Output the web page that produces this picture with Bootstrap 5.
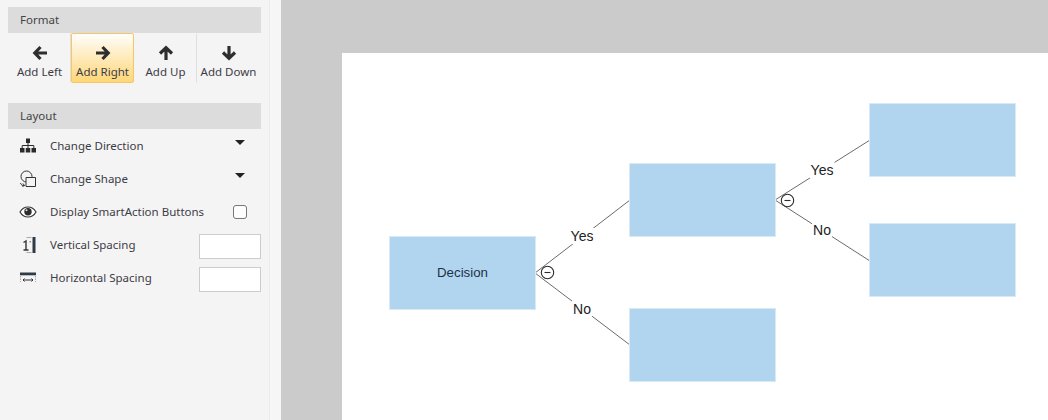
<!DOCTYPE html>
<html lang="en">
<head>
<meta charset="utf-8">
<title>Decision tree</title>
<link href="https://cdn.jsdelivr.net/npm/bootstrap@5.3.0/dist/css/bootstrap.min.css" rel="stylesheet">
<style>
html,body{height:420px;overflow:hidden;background:#cbcbcb}
.shell{width:1048px;height:420px}
.side{width:281px;flex:none;background:#f4f4f4;padding:7px 9px 0 8px;font-family:"Noto Sans","Open Sans",sans-serif;font-size:11.5px;color:#3c3c46;border-right:11px solid #f6f6f6;box-shadow:inset -1px 0 0 #ececec}
.sect{height:26px;background:#dcdcdc;padding-left:12px;line-height:26px;font-size:11.5px;color:#444}
.tools{height:50px;margin-bottom:20px}
.tool{width:63px;height:50px;flex:none;padding:0;border:1px solid transparent;border-radius:2px;color:#3c3c46;line-height:1.2;--bs-btn-font-size:11.5px}
.tool svg{display:block;margin:7px auto 4px;width:16px;height:16px}
.tool.on{border-color:#f7c766;background:linear-gradient(#fffefb,#fed677)}
.tool.sepr{border-right-color:#e0e0e0;border-radius:0}
.optrow{height:33px;padding-left:11px}
.optrow svg{width:18px;height:18px;flex:none;margin-right:13px}
.optrow .caretdn{width:0;height:0;border:5px solid transparent;border-top:5px solid #222;border-bottom:0;margin:-6px 16px 0 auto}
.optrow .form-check-input{width:14px;height:14px;margin:1px 14px 0 auto;border-color:#777;border-radius:3px;background-color:#fdfdfd}
.optrow .form-control{width:62px;height:25px;flex:none;margin:3px 0 0 auto;border:1px solid #ccc;border-radius:0;padding:0 4px;font-size:12px}
.stage{flex:1 1 auto;padding:53px 0 0 61px;overflow:hidden}
.sheet{position:relative;width:720px;height:400px;background:#fff}
.sheet svg{position:absolute;left:0;top:0}
.nodebox{position:absolute;width:145px;height:72px;background:#b2d5ef;box-shadow:0 0 0 1px #d9eaf7;display:flex;align-items:center;justify-content:center;font:13.3px/1 "Liberation Sans",Arial,sans-serif;color:#1c3048}
.edgelab{position:absolute;background:#fff;font:14px/16px "Liberation Sans",Arial,sans-serif;color:#222;padding:0 1px;transform:translate(-50%,-50%)}
</style>
</head>
<body>
<div class="shell d-flex">
  <aside class="side">
    <div class="sect">Format</div>
    <div class="tools d-flex">
      <button type="button" class="btn tool sepr"><svg viewBox="0 0 16 16"><path d="M8.500 2 2.800 8 8.500 14M3 8h12" fill="none" stroke="#2e2e2e" stroke-width="3.200"/></svg>Add Left</button>
      <button type="button" class="btn tool on"><svg viewBox="0 0 16 16"><path d="M7.500 2 13.200 8 7.500 14M13 8H1" fill="none" stroke="#2e2e2e" stroke-width="3.200"/></svg>Add Right</button>
      <button type="button" class="btn tool sepr"><svg viewBox="0 0 16 16"><path d="M2 8.500 8 2.800 14 8.500M8 3v12" fill="none" stroke="#2e2e2e" stroke-width="3.200"/></svg>Add Up</button>
      <button type="button" class="btn tool"><svg viewBox="0 0 16 16"><path d="M2 7.500 8 13.200 14 7.500M8 13V1" fill="none" stroke="#2e2e2e" stroke-width="3.200"/></svg>Add Down</button>
    </div>
    <div class="sect">Layout</div>
    <div class="optrow d-flex align-items-center">
      <svg viewBox="0 0 18 18"><path d="M7 1.500h4v4.500H7zM1 11h4.500v4.500H1zM6.750 11h4.500v4.500h-4.500zM12.500 11H17v4.500h-4.500z" fill="#2a2a2a"/><path d="M9 6v5M3.200 11V8.500h11.600V11" fill="none" stroke="#2a2a2a"/></svg>
      <span>Change Direction</span><i class="caretdn"></i>
    </div>
    <div class="optrow d-flex align-items-center">
      <svg viewBox="0 0 18 18"><circle cx="7.500" cy="6.500" r="5.500" fill="none" stroke="#333"/><path d="M7 7.500h9.500v9H7z" fill="#f4f4f4" stroke="#333"/><path d="M1.500 13c.5 2 2 2.800 4 2.500M4 13.500l1.500 2-2 1" fill="none" stroke="#333"/></svg>
      <span>Change Shape</span><i class="caretdn"></i>
    </div>
    <div class="optrow d-flex align-items-center">
      <svg viewBox="0 0 18 18"><path d="M1 9c2-3.500 4.800-5 8-5s6 1.500 8 5c-2 3.500-4.800 5-8 5s-6-1.500-8-5z" fill="#fff" stroke="#333" stroke-width="1.200"/><circle cx="9" cy="8.700" r="3.700" fill="#2c2c2c"/><circle cx="7.500" cy="7.200" r="1" fill="#ddd"/></svg>
      <span>Display SmartAction Buttons</span>
      <input class="form-check-input" type="checkbox" aria-label="Display SmartAction Buttons">
    </div>
    <div class="optrow d-flex align-items-center">
      <svg viewBox="0 0 18 18"><path d="M13.500 1h3v16h-3z" fill="#2e3a46"/><path d="M7.500 1.500h5M7.500 16.500h5" stroke="#aaa" fill="none"/><path d="M4.500 6.500 7 5V14M4.500 14h5" fill="none" stroke="#333" stroke-width="1.400"/><path d="M10.500 5h1.500v1.500h-1.500z" fill="#888"/></svg>
      <span>Vertical Spacing</span>
      <input class="form-control" type="text" aria-label="Vertical Spacing">
    </div>
    <div class="optrow d-flex align-items-center">
      <svg viewBox="0 0 18 18"><path d="M1 3.500h16v2.800H1z" fill="#2e3a46"/><path d="M1.500 7v6M16.500 7v6" stroke="#aaa" stroke-dasharray="1.500 1" fill="none"/><path d="M4 11h10M5.500 9.500 4 11l1.500 1.500M12.500 9.500 14 11l-1.500 1.500" fill="none" stroke="#333"/></svg>
      <span>Horizontal Spacing</span>
      <input class="form-control" type="text" aria-label="Horizontal Spacing">
    </div>
  </aside>
  <main class="stage">
    <div class="sheet">
      <svg width="720" height="400" viewBox="0 0 720 400">
        <g fill="none" stroke="#6b6b6b" stroke-width="1">
          <path d="M193 220 288 147M193 220 288 292M433 147 528 87M433 147 528 208"/>
        </g>
      </svg>
      <div class="nodebox" style="left:48px;top:184px">Decision</div>
      <div class="nodebox" style="left:288px;top:111px"></div>
      <div class="nodebox" style="left:288px;top:256px"></div>
      <div class="nodebox" style="left:528px;top:51px"></div>
      <div class="nodebox" style="left:528px;top:171px"></div>
      <span class="edgelab" style="left:240px;top:183px">Yes</span>
      <span class="edgelab" style="left:240px;top:256px">No</span>
      <span class="edgelab" style="left:480px;top:117px">Yes</span>
      <span class="edgelab" style="left:480px;top:177px">No</span>
      <svg width="720" height="400" viewBox="0 0 720 400">
        <g fill="#fff" stroke="#2a2a2a" stroke-width="1.100">
          <circle cx="205.500" cy="219.500" r="6.200"/><path d="M202.500 219.500h6"/>
          <circle cx="445.500" cy="147.500" r="6.200"/><path d="M442.500 147.500h6"/>
        </g>
      </svg>
    </div>
  </main>
</div>
<script src="https://cdn.jsdelivr.net/npm/bootstrap@5.3.0/dist/js/bootstrap.bundle.min.js"></script>
</body>
</html>
